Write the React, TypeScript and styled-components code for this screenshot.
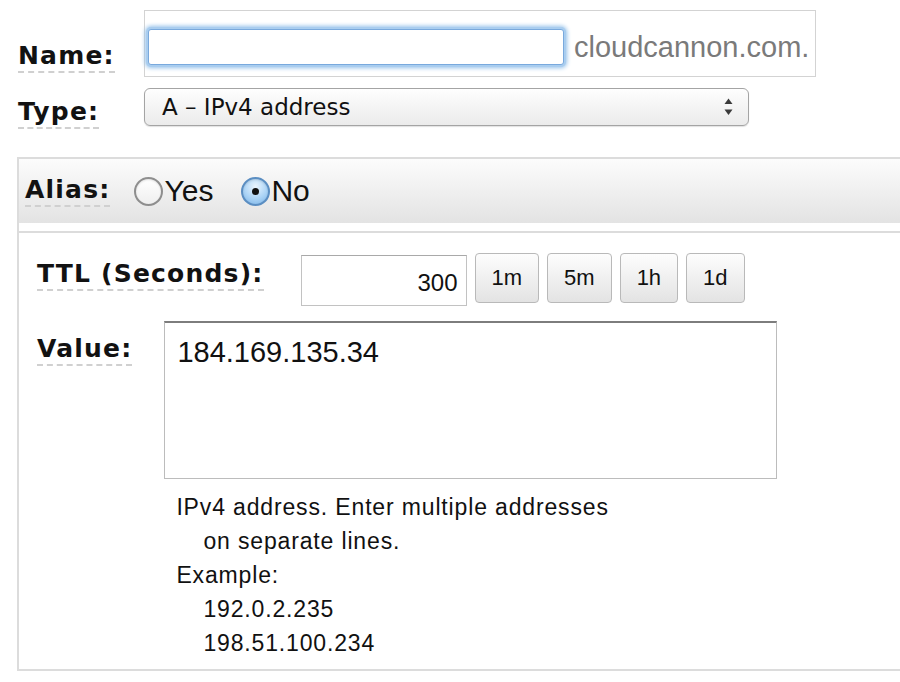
import React from 'react';
import styled, { createGlobalStyle } from 'styled-components';

const GlobalStyle = createGlobalStyle`
  html, body {
    margin: 0;
    padding: 0;
    background: #ffffff;
    overflow: hidden;
  }
  body {
    font-family: "Liberation Sans", Arial, sans-serif;
    color: #111;
  }
`;

const Page = styled.div`
  padding-top: 10px;
`;

const TopFields = styled.div`
  display: flex;
  flex-direction: column;
  gap: 11px;
  padding-left: 18px;
`;

const FieldRow = styled.div`
  display: grid;
  grid-template-columns: 126px auto;
  align-items: end;
  justify-content: start;
`;

const Label = styled.span<{ $drop?: number; $top?: number }>`
  justify-self: start;
  font-family: "DejaVu Sans", Verdana, sans-serif;
  font-weight: bold;
  font-size: 25px;
  line-height: 28px;
  letter-spacing: 1.2px;
  color: #121212;
  padding-bottom: 1px;
  border-bottom: 2px dashed #d0d0d0;
  white-space: nowrap;
  margin-bottom: ${p => p.$drop ?? 0}px;
  margin-top: ${p => p.$top ?? 0}px;
`;

const NameBox = styled.div`
  display: flex;
  align-items: center;
  box-sizing: border-box;
  width: 672px;
  border: 1px solid #d3d3d3;
  padding: 18px 3px 11px 3px;
`;

const NameInput = styled.input`
  box-sizing: border-box;
  width: 416px;
  height: 36px;
  border: 1px solid #79a9dd;
  border-radius: 3px;
  box-shadow: 0 0 0 2px #a9cdef, 0 0 4px 3px #94c1ea;
  outline: none;
  padding: 0 6px;
  font: 24px "Liberation Sans", Arial, sans-serif;
`;

const Suffix = styled.span`
  margin-left: 10px;
  font-size: 29px;
  line-height: 36px;
  color: #7a7a7a;
`;

const SelectBox = styled.div`
  box-sizing: border-box;
  width: 605px;
  height: 38px;
  display: flex;
  align-items: center;
  justify-content: space-between;
  padding: 0 15px 0 17px;
  border: 1px solid #a4a4a4;
  border-radius: 6px;
  background: linear-gradient(#fefefe, #ebebeb);
  box-shadow: 0 1px 1px rgba(0, 0, 0, 0.12);
  font-family: "DejaVu Sans", Verdana, sans-serif;
  font-size: 23px;
  color: #111;
`;

const Panel = styled.section`
  margin: 31px 0 0 17px;
  border: 2px solid #dcdcdc;
  border-right: none;
`;

const PanelHeader = styled.div`
  height: 64px;
  display: flex;
  align-items: center;
  gap: 24px;
  padding-left: 6px;
  margin-bottom: 8px;
  background: linear-gradient(#fcfcfc, #e3e3e3);
`;

const RadioGroup = styled.div`
  display: flex;
  align-items: center;
  gap: 28px;
`;

const RadioOption = styled.label`
  display: flex;
  align-items: center;
  font-size: 30px;
  line-height: 1;
  color: #111;
`;

const RadioDot = styled.span<{ $on?: boolean }>`
  box-sizing: border-box;
  width: 29px;
  height: 29px;
  margin-right: 1px;
  border-radius: 50%;
  border: 2px solid ${p => (p.$on ? '#5b8ec2' : '#8e8e8e')};
  background: ${p =>
    p.$on
      ? 'radial-gradient(circle at 50% 30%, #eaf5fe 0%, #acd4f6 55%, #78b2e6 100%)'
      : 'linear-gradient(#ffffff, #efefef)'};
  box-shadow: inset 0 1px 2px rgba(0, 0, 0, 0.12);
  display: flex;
  align-items: center;
  justify-content: center;

  &::after {
    content: '';
    display: ${p => (p.$on ? 'block' : 'none')};
    width: 7px;
    height: 7px;
    border-radius: 50%;
    background: #111;
  }
`;

const PanelBody = styled.div`
  border-top: 2px solid #dcdcdc;
  padding: 20px 0 9px 18px;
  display: flex;
  flex-direction: column;
  gap: 15px;
`;

const BodyRow = styled.div<{ $gap: number }>`
  display: flex;
  align-items: flex-start;
  gap: ${p => p.$gap}px;
`;

const Controls = styled.div`
  display: flex;
  align-items: flex-start;
  gap: 8px;
`;

const TtlInput = styled.input`
  box-sizing: border-box;
  width: 166px;
  height: 51px;
  margin-top: 2px;
  border: 1px solid #c2c2c2;
  border-top-color: #a9a9a9;
  outline: none;
  padding: 4px 8px 0 8px;
  text-align: right;
  font: 24px "Liberation Sans", Arial, sans-serif;
  color: #111;
`;

const QuickButton = styled.button`
  box-sizing: border-box;
  height: 50px;
  padding: 0 16px;
  border: 1px solid #b9b9b9;
  border-radius: 4px;
  background: linear-gradient(#fdfdfd, #e3e3e3);
  font: 22px "Liberation Sans", Arial, sans-serif;
  color: #111;
`;

const ValueColumn = styled.div`
  display: flex;
  flex-direction: column;
`;

const ValueArea = styled.textarea`
  box-sizing: border-box;
  width: 613px;
  height: 158px;
  border: 1px solid #bcbcbc;
  border-top: 2px solid #7d7d7d;
  padding: 12px 12px;
  resize: none;
  outline: none;
  font: 29px/1.2 "Liberation Sans", Arial, sans-serif;
  color: #111;
`;

const Help = styled.div`
  margin: 11px 0 0 12px;
  font-size: 23px;
  line-height: 34px;
  letter-spacing: 0.85px;
  color: #111;
`;

const HelpLine = styled.div<{ $indent?: boolean }>`
  padding-left: ${p => (p.$indent ? 27 : 0)}px;
`;

const SelectArrows = () => (
  <svg width="9" height="18" viewBox="0 0 9 18">
    <polygon points="0.5,6 4.5,0.5 8.5,6" fill="#3a3a3a" />
    <polygon points="0.5,11.5 8.5,11.5 4.5,17" fill="#3a3a3a" />
  </svg>
);

export default function App() {
  return (
    <Page>
      <GlobalStyle />
      <TopFields>
        <FieldRow>
          <Label $drop={4}>Name:</Label>
          <NameBox>
            <NameInput type="text" />
            <Suffix>cloudcannon.com.</Suffix>
          </NameBox>
        </FieldRow>
        <FieldRow>
          <Label $drop={-3}>Type:</Label>
          <SelectBox>
            <span>A – IPv4 address</span>
            <SelectArrows />
          </SelectBox>
        </FieldRow>
      </TopFields>

      <Panel>
        <PanelHeader>
          <Label>Alias:</Label>
          <RadioGroup>
            <RadioOption>
              <RadioDot />
              Yes
            </RadioOption>
            <RadioOption>
              <RadioDot $on />
              No
            </RadioOption>
          </RadioGroup>
        </PanelHeader>

        <PanelBody>
          <BodyRow $gap={37}>
            <Label $top={7}>TTL (Seconds):</Label>
            <Controls>
              <TtlInput type="text" defaultValue="300" />
              <QuickButton>1m</QuickButton>
              <QuickButton>5m</QuickButton>
              <QuickButton>1h</QuickButton>
              <QuickButton>1d</QuickButton>
            </Controls>
          </BodyRow>
          <BodyRow $gap={32}>
            <Label $top={14}>Value:</Label>
            <ValueColumn>
              <ValueArea defaultValue="184.169.135.34" />
              <Help>
                <HelpLine>IPv4 address. Enter multiple addresses</HelpLine>
                <HelpLine $indent>on separate lines.</HelpLine>
                <HelpLine>Example:</HelpLine>
                <HelpLine $indent>192.0.2.235</HelpLine>
                <HelpLine $indent>198.51.100.234</HelpLine>
              </Help>
            </ValueColumn>
          </BodyRow>
        </PanelBody>
      </Panel>
    </Page>
  );
}
